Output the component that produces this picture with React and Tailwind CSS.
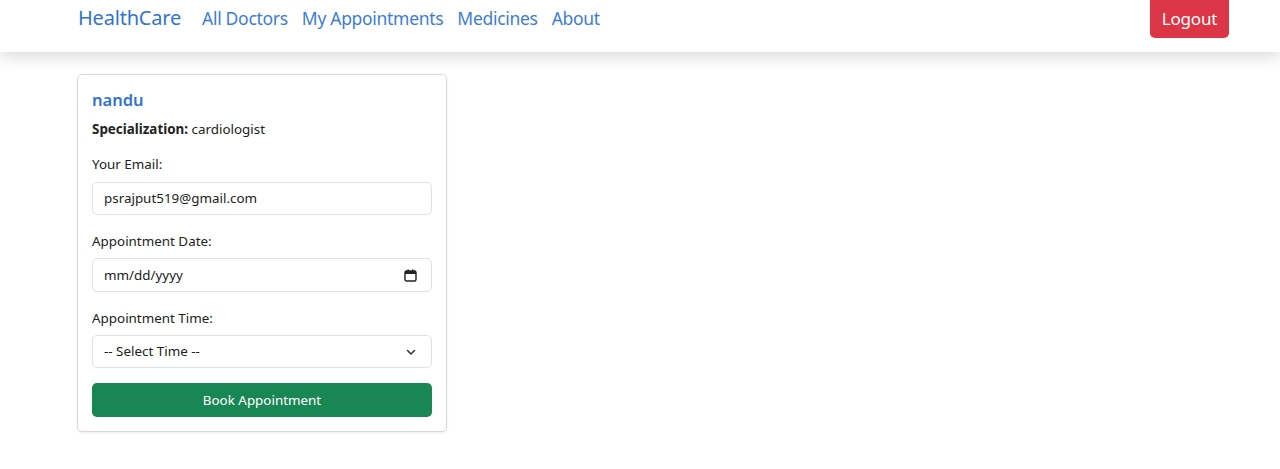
import React from "react";

export default function App() {
  const font = { fontFamily: '"Noto Sans", "Open Sans", sans-serif' };
  return (
    <div className="w-[1280px] h-[469px] bg-white overflow-hidden" style={font}>
      <nav className="h-[52px] bg-white flex items-center shadow-[0_6px_14px_rgba(0,0,0,0.13)] relative z-10">
        <div className="w-full flex items-center pl-[78px] pr-[51px] -mt-[14px]">
          <span className="text-[20px] text-[#2f74d0] mr-[21px] tracking-[-0.2px] -mt-[2px]">HealthCare</span>
          <div className="flex items-center gap-[14px] text-[17.5px] text-[#3b7dd6] tracking-[-0.3px] -mt-[2px]">
            <span>All Doctors</span>
            <span>My Appointments</span>
            <span>Medicines</span>
            <span>About</span>
          </div>
          <div className="ml-auto">
            <button className="bg-[#dc3545] text-white text-[17px] rounded-[5px] w-[79px] h-[50px] pt-[11px] -mt-[12px] tracking-[-0.2px]">
              Logout
            </button>
          </div>
        </div>
      </nav>
      <div className="pl-[77px] pt-[22px]">
        <div className="w-[370px] h-[358px] border border-[#d9d9d9] rounded-[5px] shadow-[0_1px_3px_rgba(0,0,0,0.08)] px-[14px] pt-[13px]">
          <div className="text-[16.5px] font-semibold text-[#2f74d0] leading-[24px]">nandu</div>
          <div className="text-[13.4px] text-[#222] mt-[8px] leading-[18px]">
            <span className="font-bold">Specialization:</span> cardiologist
          </div>
          <div className="text-[13.4px] text-[#222] mt-[17px] leading-[18px]">Your Email:</div>
          <div className="mt-[9px] h-[33px] border border-[#dee2e6] rounded-[5px] flex items-center px-[11px] text-[13.4px] text-[#222]">
            psrajput519@gmail.com
          </div>
          <div className="text-[13.4px] text-[#222] mt-[17px] leading-[18px]">Appointment Date:</div>
          <div className="mt-[8px] h-[34px] border border-[#dee2e6] rounded-[5px] flex items-center px-[11px] text-[13.4px] text-[#222]">
            <span>mm/dd/yyyy</span>
            <svg className="ml-auto mr-[3px]" width="13" height="13" viewBox="0 0 13 13">
              <rect x="1" y="2" width="11" height="10" rx="1.5" fill="none" stroke="#222" strokeWidth="1.4" />
              <rect x="1" y="2" width="11" height="3" fill="#222" />
              <rect x="3.5" y="0.5" width="1.5" height="2.5" fill="#222" />
              <rect x="8" y="0.5" width="1.5" height="2.5" fill="#222" />
            </svg>
          </div>
          <div className="text-[13.4px] text-[#222] mt-[17px] leading-[18px]">Appointment Time:</div>
          <div className="mt-[8px] h-[33px] border border-[#dee2e6] rounded-[5px] flex items-center px-[11px] text-[13.4px] text-[#222]">
            <span>-- Select Time --</span>
            <svg className="ml-auto mr-[4px]" width="10" height="10" viewBox="0 0 10 10">
              <path d="M1.5 3.5 L5 7 L8.5 3.5" fill="none" stroke="#333" strokeWidth="1.5" strokeLinecap="round" strokeLinejoin="round" />
            </svg>
          </div>
          <button className="mt-[15px] w-full h-[34px] bg-[#198754] rounded-[5px] text-white text-[13.4px]">
            Book Appointment
          </button>
        </div>
      </div>
    </div>
  );
}
